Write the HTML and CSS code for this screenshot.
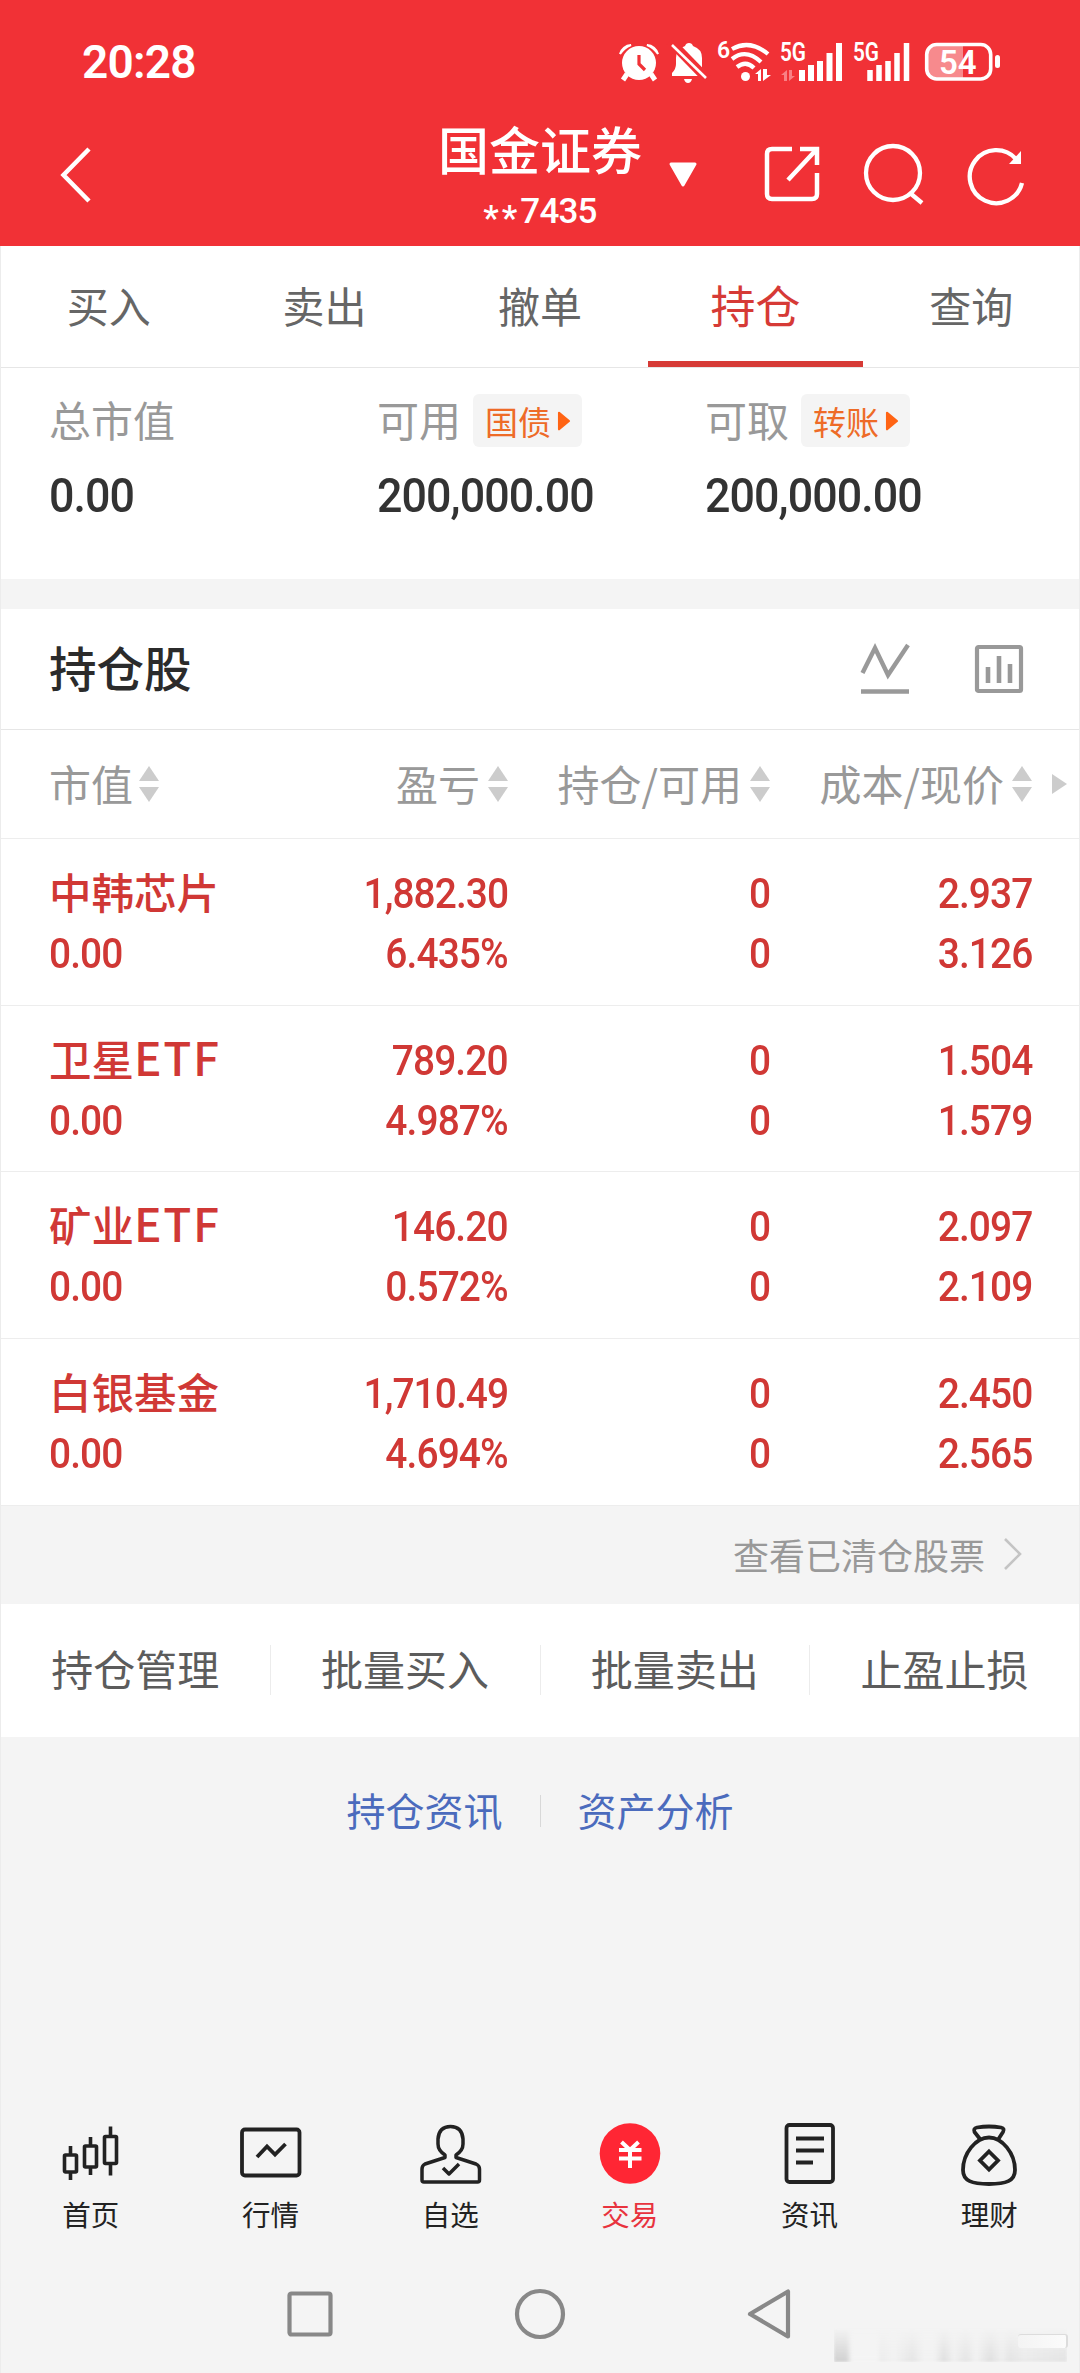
FILE: index.html
```html
<!DOCTYPE html>
<html lang="zh-CN">
<head>
<meta charset="UTF-8">
<title>国金证券 - 持仓</title>
<link rel="stylesheet" href="styles.css">
</head>
<body>
<header class="header">
<div class="status-bar">
<span class="time">20:28</span>
<div class="status-icons">
<svg class="ic-alarm" width="40" height="42" viewBox="0 0 40 42">
<circle cx="20" cy="22" r="17" fill="#fff"/>
<path d="M1 13A12 12 0 0 1 12 4Q5 7 1 13ZM39 13A12 12 0 0 0 28 4Q35 7 39 13Z" fill="#fff" stroke="#fff" stroke-width="2"/>
<path d="M8 33L4 39M32 33L36 39" stroke="#fff" stroke-width="5"/>
<path d="M20 14V23L26 29" fill="none" stroke="#f13136" stroke-width="3.2"/>
</svg>
<svg class="ic-bell" width="38" height="42" viewBox="0 0 38 42">
<path d="M19 2q3 0 4 3q9 3 9 12v10l6 8H2v-3q4-4 4-9v-6q0-9 9-12q1-3 4-3z" fill="#fff"/>
<path d="M14 38h8q-1 4-4 4t-4-4z" fill="#fff"/>
<path d="M0 0L37 38" stroke="#f13136" stroke-width="9"/>
<path d="M2 4L36 37" stroke="#fff" stroke-width="2.6"/>
</svg>
<svg class="ic-wifi" width="54" height="42" viewBox="0 0 54 42">
<text x="-1" y="17" class="svg-text" font-size="23">6</text>
<path d="M14 8Q32 -2 50 13M14 18Q28 7 43 21M19 26Q28 19 36 27" fill="none" stroke="#fff" stroke-width="4.2"/>
<circle cx="27.500" cy="35.500" r="4.500" fill="#fff"/>
<path d="M37 33l6-5v12h-3v-7zM45 28v12l8-6h-4v-6z" fill="#fff"/>
</svg>
<svg class="ic-signal" width="64" height="42" viewBox="0 0 64 42">
<text x="0" y="20" class="svg-text" font-size="25.500" textLength="26" lengthAdjust="spacingAndGlyphs">5G</text>
<path d="M1 34l6-5v11h-3v-6zM9 29v11l6-5h-3v-6z" fill="#f98085"/>
<path d="M22 29v11M31 24v16M40 20v20M49.500 12v28M59 2v38" stroke="#fff" stroke-width="6"/>
</svg>
<svg class="ic-signal2" width="58" height="42" viewBox="0 0 58 42">
<text x="0" y="20" class="svg-text" font-size="25.500" textLength="26" lengthAdjust="spacingAndGlyphs">5G</text>
<path d="M17 29v11M26 24v16M35 20v20M44 12v28M53.500 2v38" stroke="#fff" stroke-width="5.500"/>
</svg>
<svg class="ic-battery" width="77" height="42" viewBox="0 0 77 42">
<path d="M12 4H39V37H12Q4 37 4 29V12Q4 4 12 4Z" fill="#f78a8d"/>
<rect x="2.700" y="3.500" width="64" height="34.500" rx="10" fill="none" stroke="#fff" stroke-width="3.600"/>
<rect x="71" y="14" width="5" height="13" rx="2.500" fill="#fff"/>
<text x="15" y="33" class="svg-text" font-size="33">54</text>
</svg>
</div>
</div>
<div class="title-bar">
<div class="title-left">
<svg width="32" height="56" viewBox="0 0 32 56"><path d="M29 2L3.500 28L29 54" fill="none" stroke="#fff" stroke-width="4.500"/></svg>
</div>
<div class="title-center">
<div class="broker">国金证券</div>
<div class="account"><span class="stars">**</span>7435</div>
</div>
<div class="title-right">
<svg class="ic-caret" width="30" height="26" viewBox="0 0 30 26"><path d="M3 2H27L15 23Z" fill="#fff" stroke="#fff" stroke-width="3" stroke-linejoin="round"/></svg>
<svg class="ic-share" width="56" height="56" viewBox="0 0 56 56"><path d="M28 3H8Q3 3 3 8V48Q3 53 8 53H48Q53 53 53 48V27M36 3H53V19M52 4L24 34" fill="none" stroke="#fff" stroke-width="4.500"/></svg>
<svg class="ic-search" width="62" height="60" viewBox="0 0 62 60"><circle cx="30" cy="29" r="27" fill="none" stroke="#fff" stroke-width="4.300"/><path d="M47 49L59 59" stroke="#fff" stroke-width="4.300"/></svg>
<svg class="ic-refresh" width="58" height="60" viewBox="0 0 58 60"><path d="M49 14A26.500 26.500 0 1 0 55 38" fill="none" stroke="#fff" stroke-width="4.300"/><path d="M54 6V19H42Z" fill="#fff"/></svg>
</div>
</div>
</header>

<main class="content">
<nav class="tabs">
<span class="tab">买入</span>
<span class="tab">卖出</span>
<span class="tab">撤单</span>
<span class="tab active">持仓</span>
<span class="tab">查询</span>
</nav>

<section class="summary">
<div class="summary-item">
<div class="summary-label">总市值</div>
<div class="summary-value">0.00</div>
</div>
<div class="summary-item">
<div class="summary-label">可用<span class="badge">国债<svg width="14" height="22" viewBox="0 0 12 20"><path d="M1.500 2.500L10.500 10L1.500 17.500Z" fill="#ff6414" stroke="#ff6414" stroke-width="2" stroke-linejoin="round"/></svg></span></div>
<div class="summary-value">200,000.00</div>
</div>
<div class="summary-item">
<div class="summary-label">可取<span class="badge">转账<svg width="14" height="22" viewBox="0 0 12 20"><path d="M1.500 2.500L10.500 10L1.500 17.500Z" fill="#ff6414" stroke="#ff6414" stroke-width="2" stroke-linejoin="round"/></svg></span></div>
<div class="summary-value">200,000.00</div>
</div>
</section>

<section class="holdings">
<div class="holdings-title">
<h2>持仓股</h2>
<svg class="ic-line" width="50" height="52" viewBox="0 0 50 52"><path d="M2.500 30L15 5L28 32L48 2M1 48.500H49" fill="none" stroke="#999" stroke-width="4.400"/></svg>
<svg class="ic-bars" width="50" height="52" viewBox="0 0 50 52"><rect x="3" y="4" width="44" height="44" rx="1.500" fill="none" stroke="#999" stroke-width="4.200"/><path d="M14 24V40M25 13V40M36 21V40" stroke="#999" stroke-width="4.600"/></svg>
</div>

<div class="row row-head">
<span class="cell">市值<i class="sort"></i></span>
<span class="cell">盈亏<i class="sort"></i></span>
<span class="cell">持仓/可用<i class="sort"></i></span>
<span class="cell">成本/现价<i class="sort"></i></span>
<i class="more"></i>
</div>

<div class="row">
<div class="cell"><b class="name">中韩芯片</b><span>0.00</span></div>
<div class="cell"><span>1,882.30</span><span>6.435%</span></div>
<div class="cell"><span>0</span><span>0</span></div>
<div class="cell"><span>2.937</span><span>3.126</span></div>
</div>
<div class="row">
<div class="cell"><b class="name">卫星<em>ETF</em></b><span>0.00</span></div>
<div class="cell"><span>789.20</span><span>4.987%</span></div>
<div class="cell"><span>0</span><span>0</span></div>
<div class="cell"><span>1.504</span><span>1.579</span></div>
</div>
<div class="row">
<div class="cell"><b class="name">矿业<em>ETF</em></b><span>0.00</span></div>
<div class="cell"><span>146.20</span><span>0.572%</span></div>
<div class="cell"><span>0</span><span>0</span></div>
<div class="cell"><span>2.097</span><span>2.109</span></div>
</div>
<div class="row">
<div class="cell"><b class="name">白银基金</b><span>0.00</span></div>
<div class="cell"><span>1,710.49</span><span>4.694%</span></div>
<div class="cell"><span>0</span><span>0</span></div>
<div class="cell"><span>2.450</span><span>2.565</span></div>
</div>
</section>

<div class="cleared">查看已清仓股票<svg width="20" height="32" viewBox="0 0 20 32"><path d="M2 1L17 16L2 31" fill="none" stroke="#c4c4c4" stroke-width="2.600"/></svg></div>

<div class="actions">
<span>持仓管理</span>
<span>批量买入</span>
<span>批量卖出</span>
<span>止盈止损</span>
</div>

<div class="links">
<a>持仓资讯</a>
<a>资产分析</a>
</div>
</main>

<footer class="footer">
<nav class="bottom-nav">
<div class="nav-item">
<svg width="64" height="66" viewBox="0 0 64 66"><g fill="none" stroke="#222" stroke-width="3.600"><rect x="5.500" y="34" width="12" height="17" rx="1"/><path d="M11.500 25v9M11.500 51v8"/><rect x="25.500" y="25" width="12" height="21" rx="1"/><path d="M31.500 16v9M31.500 46v8"/><rect x="45.500" y="15.500" width="12" height="27" rx="1"/><path d="M51.500 5.500v10M51.500 42.500v12"/></g></svg>
<span>首页</span>
</div>
<div class="nav-item">
<svg width="64" height="66" viewBox="0 0 64 66"><g fill="none" stroke="#222" stroke-width="3.800"><rect x="3" y="8.500" width="57.500" height="46" rx="3"/><path d="M18 36L28 25.500L36 33.500L46.500 23"/></g></svg>
<span>行情</span>
</div>
<div class="nav-item">
<svg width="64" height="66" viewBox="0 0 64 66"><g fill="none" stroke="#222" stroke-width="3.500" stroke-linejoin="round"><path d="M27 36.500V34Q20 29.500 20 23V18Q21 5.500 32.500 5.500T45 18V23Q45 29.500 38 34V36.500L58 43Q61.500 44.500 61.500 48V59Q61.500 61 59.500 61H6Q4 61 4 59V48Q4 44.500 7 43Z"/><path d="M25 47L31 53L41 43"/></g></svg>
<span>自选</span>
</div>
<div class="nav-item active">
<svg width="64" height="66" viewBox="0 0 64 66"><circle cx="32" cy="32.500" r="30.300" fill="#ff2634"/><path d="M23.500 21L32 29L40.500 21M21 29H43.500M21 37.500H43.500M32 29V47" fill="none" stroke="#fff" stroke-width="4"/></svg>
<span>交易</span>
</div>
<div class="nav-item">
<svg width="64" height="66" viewBox="0 0 64 66"><g fill="none" stroke="#222" stroke-width="3.800"><rect x="8.500" y="4" width="46.500" height="57" rx="3"/><path d="M18 17.500H46M18 29.500H46M18 41.500H35"/></g></svg>
<span>资讯</span>
</div>
<div class="nav-item">
<svg width="64" height="66" viewBox="0 0 64 66"><g fill="none" stroke="#222" stroke-width="3.800" stroke-linejoin="round"><path d="M23 18L17.500 11Q16 7.500 20 6.500Q32 4.500 44 6.500Q48 7.500 46 11L41.500 18"/><path d="M32 16.500C45 16.500 58 32 58 49C58 60 49 63 32 63S6 60 6 49C6 32 19 16.500 32 16.500Z"/><path d="M32 30.500L41 39.500L32 48.500L23 39.500Z" stroke-linejoin="miter"/></g></svg>
<span>理财</span>
</div>
</nav>
<div class="system-nav">
<svg width="52" height="52" viewBox="0 0 52 52"><rect x="5.500" y="5.500" width="41" height="41" rx="2" fill="none" stroke="#888" stroke-width="4.200"/></svg>
<svg width="52" height="52" viewBox="0 0 52 52"><circle cx="26" cy="26" r="23" fill="none" stroke="#888" stroke-width="4.200"/></svg>
<svg width="52" height="52" viewBox="0 0 52 52"><path d="M44 3.500V48.500L6 26Z" fill="none" stroke="#888" stroke-width="4.200" stroke-linejoin="round"/></svg>
</div>
<div class="smudge"></div>
<div class="smudge-end"></div>
</footer>
</body>
</html>
```

FILE: styles.css
```css
* {
  box-sizing: border-box;
}
body {
  margin: 0;
  width: 1080px;
  height: 2373px;
  background-color: #f4f4f4;
  font-family: "Noto Sans CJK SC", sans-serif;
  color: #333;
  display: flex;
  flex-direction: column;
}
svg {
  display: block;
  flex: none;
  overflow: visible;
}

/* header */
.header {
  flex: none;
  height: 246px;
  background-color: #f13136;
  color: #fff;
}
.status-bar {
  height: 123px;
  padding: 0 79px 0 82px;
  display: flex;
  align-items: center;
  justify-content: space-between;
}
.time {
  font: 600 46px/60px Roboto, sans-serif;
  letter-spacing: -0.8px;
}
.status-icons {
  display: flex;
}
.ic-bell { margin-left: 11px; }
.ic-wifi { margin-left: 10px; }
.ic-signal { margin-left: 8px; }
.ic-signal2 { margin-left: 9px; }
.ic-battery { margin-left: 13px; }
.svg-text {
  font-family: Roboto, sans-serif;
  font-weight: 600;
  fill: #fff;
}
.title-bar {
  height: 123px;
  display: grid;
  grid-template-columns: 1fr 204px 1fr;
}
.title-left {
  padding: 24px 0 0 60px;
}
.title-center {
  text-align: center;
}
.broker {
  font-size: 51px;
  font-weight: 500;
  height: 62px;
  line-height: 51px;
}
.account {
  font: 500 35px/54px Roboto, sans-serif;
  letter-spacing: -0.8px;
}
.stars {
  vertical-align: -7px;
  letter-spacing: 3px;
}
.title-right {
  display: flex;
  padding: 21px 0 0 26px;
}
.ic-caret { margin-top: 18px; }
.ic-share { margin: 2px 0 0 66px; }
.ic-search { margin-left: 43px; }
.ic-refresh { margin: 1px 0 0 42px; }

/* tabs */
.content {
  flex: none;
  height: 1850px;
  border: solid #ececec;
  border-width: 0 1px;
}
.tabs {
  height: 122px;
  display: flex;
  background-color: #fff;
  border-bottom: 1px solid #e6e6e6;
}
.tab {
  flex: 1;
  text-align: center;
  font-size: 42px;
  line-height: 118px;
  color: #666;
}
.tab.active {
  font-size: 45px;
  line-height: 117px;
  color: #d63a36;
  border-bottom: 6px solid #d63a36;
}

/* summary */
.summary {
  height: 211px;
  padding: 26px 48px 0;
  display: grid;
  grid-template-columns: repeat(3, 328px);
  background-color: #fff;
}
.summary-label {
  height: 53px;
  display: flex;
  align-items: center;
  font-size: 42px;
  line-height: 50px;
  padding-bottom: 3px;
  color: #999;
}
.badge {
  width: 109px;
  height: 53px;
  margin: 0 0 -3px 12px;
  padding-left: 12px;
  display: flex;
  align-items: center;
  gap: 6px;
  border-radius: 6px;
  background-color: #f4f4f4;
  font-size: 33px;
  color: #ee6b27;
}
/* narrow figures */
.summary-value {
  margin-top: 18px;
  font: 500 48px/62px Roboto, sans-serif;
  letter-spacing: -1px;
  transform: scaleX(0.933);
  transform-origin: left;
}

/* holdings */
.holdings {
  border-top: 30px solid #f4f4f4;
  background-color: #fff;
}
.holdings-title {
  height: 121px;
  padding: 0 55px 0 48px;
  display: flex;
  align-items: center;
  border-bottom: 1px solid #e6e6e6;
}
.holdings-title h2 {
  margin: 0;
  flex: 1;
  height: 60px;
  font-size: 47.5px;
  font-weight: 500;
  line-height: 55px;
  color: #2b2b2b;
}
.ic-bars { margin-left: 64px; }
.row {
  height: 166.67px;
  padding: 25px 0 0 48px;
  display: grid;
  grid-template-columns: 180px 279px 262px 262px 1fr;
  border-bottom: 1px solid #ededed;
  color: #d03835;
}
.cell {
  display: flex;
  flex-direction: column;
  align-items: flex-end;
  font: 500 42.5px/60px Roboto, sans-serif;
  letter-spacing: -1px;
}
.cell:first-child {
  align-items: flex-start;
}
.cell span {
  transform: scaleX(0.915);
  transform-origin: right;
}
.cell:first-child span {
  transform-origin: left;
}
.name {
  height: 60px;
  font: 500 42.5px/54px "Noto Sans CJK SC", sans-serif;
  letter-spacing: 0;
  white-space: nowrap;
}
.name em {
  font-style: normal;
  font-size: 46px;
  line-height: 1;
  letter-spacing: 1.6px;
}
.row-head {
  height: 109px;
  padding-top: 0;
  padding-bottom: 3px;
  align-items: center;
  color: #999;
}
.row-head .cell {
  flex-direction: row;
  justify-content: flex-end;
  align-items: center;
  gap: 8px;
  font: 400 42px/60px "Noto Sans CJK SC", sans-serif;
  letter-spacing: 0;
  white-space: nowrap;
}
.row-head .cell:first-child {
  justify-content: flex-start;
  gap: 6px;
}
.sort {
  display: grid;
  gap: 6px;
  margin-top: 3px;
}
.sort::before,
.sort::after {
  content: "";
  border: 10px solid transparent;
  border-top-width: 0;
  border-bottom: 15px solid #ccc;
}
.sort::after {
  border-top: 15px solid #ccc;
  border-bottom-width: 0;
}
.more {
  width: 0;
  margin: 3px 0 0 20px;
  border: 10px solid transparent;
  border-right-width: 0;
  border-left: 15px solid #ccc;
}

/* below the list */
.cleared {
  height: 98px;
  padding: 0 56px 1px 0;
  display: flex;
  align-items: center;
  justify-content: flex-end;
  gap: 18px;
  font-size: 36px;
  color: #999;
}
.actions {
  height: 133px;
  display: flex;
  align-items: center;
  background-color: #fff;
}
.actions span {
  flex: 1;
  height: 50px;
  text-align: center;
  font-size: 42px;
  line-height: 46px;
  color: #5c5c5c;
}
.actions span + span {
  border-left: 1px solid #ececec;
}
.links {
  padding-top: 58px;
  display: flex;
  justify-content: center;
}
.links a {
  height: 32px;
  padding: 0 37px;
  font-size: 39px;
  line-height: 28px;
  color: #4b6bbd;
}
.links a + a {
  border-left: 1px solid #d8d8d8;
}

/* bottom */
.footer {
  flex: 1;
  position: relative;
  border: solid #ececec;
  border-width: 0 1px;
}
.bottom-nav {
  height: 155px;
  padding-top: 25px;
  display: flex;
}
.nav-item {
  flex: 1;
  display: flex;
  flex-direction: column;
  align-items: center;
  gap: 7px;
  font-size: 28.5px;
  line-height: 40px;
  color: #222;
}
.nav-item.active {
  color: #e8333e;
}
.system-nav {
  padding: 37px 283px 0;
  display: flex;
  justify-content: space-between;
}
.smudge {
  position: absolute;
  right: 12px;
  bottom: 11px;
  width: 233px;
  height: 34px;
  background: linear-gradient(to right, #d0d0d0 0, #d0d0d0 12px, #f4f4f4 18px, #f4f4f4 42px, #ececec 48px, #f2f2f2 60px, #e4e4e4 78px, #f2f2f2 90px, #f2f2f2 100px, #dedede 110px, #f0f0f0 120px, #e3e3e3 132px, #f2f2f2 142px, #dedede 156px, #eee 168px, #e2e2e2 176px, #eaeaea 190px, #e2e2e2 233px);
  -webkit-mask-image: linear-gradient(transparent, #000);
  mask-image: linear-gradient(transparent, #000);
  filter: blur(1.5px);
}
.smudge-end {
  position: absolute;
  right: 11px;
  bottom: 25px;
  width: 50px;
  height: 14px;
  border: 2px solid #dcdcdc;
  border-width: 1px 2px 0 0;
  border-radius: 3px;
  background: linear-gradient(to right, #f4f4f4, #fbfbfb);
}
```
